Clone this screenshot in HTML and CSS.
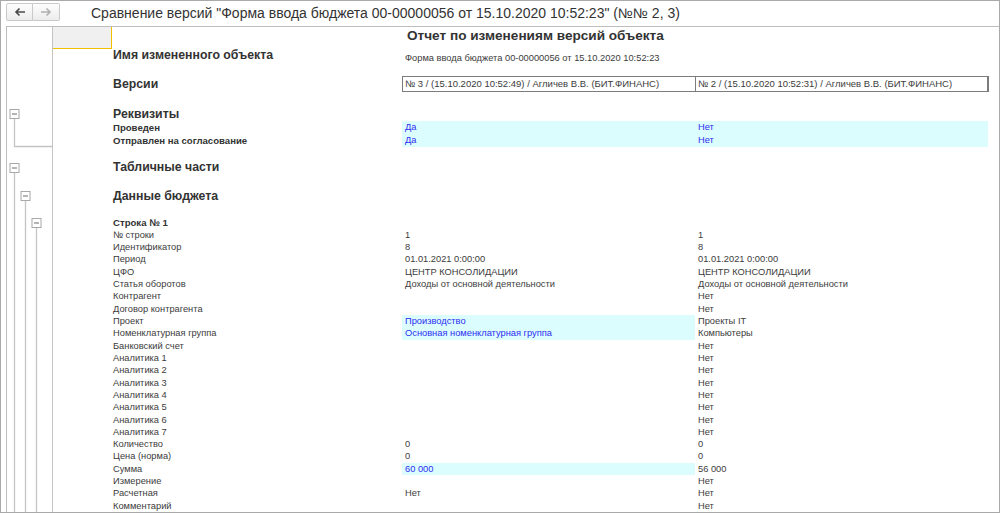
FILE: index.html
```html
<!DOCTYPE html>
<html lang="ru">
<head>
  <meta charset="UTF-8">
  <title>Сравнение версий</title>
  <link rel="stylesheet" href="styles.css">
</head>
<body>
  <div class="window">
    <div class="topbar">
      <div class="nav">
        <button class="nav-btn">
          <svg width="12" height="10" viewBox="0 0 12 10"><path d="M11 5H2M5.5 1.5L2 5l3.5 3.5" fill="none" stroke="#4a4a4a" stroke-width="1.6"/></svg>
        </button>
        <button class="nav-btn">
          <svg width="12" height="10" viewBox="0 0 12 10"><path d="M1 5h9M6.5 1.5L10 5 6.5 8.5" fill="none" stroke="#b0b0b0" stroke-width="1.6"/></svg>
        </button>
      </div>
      <div class="title">Сравнение версий "Форма ввода бюджета 00-00000056 от 15.10.2020 10:52:23" (№№ 2, 3)</div>
    </div>

    <div class="report">
      <div class="tree">
        <svg width="45" height="485" viewBox="0 0 45 485">
          <g stroke="#c4c4c4" stroke-width="1.3" fill="none">
            <path d="M7.5 91.5V119.5H45"/>
            <path d="M7.5 145.5V485"/>
            <path d="M18.5 173.5V485"/>
            <path d="M29.5 200.5V485"/>
          </g>
          <g fill="#fff" stroke="#a8a8a8">
            <rect x="3" y="82.5" width="9" height="9"/>
            <rect x="3" y="136.5" width="9" height="9"/>
            <rect x="14" y="164.5" width="9" height="9"/>
            <rect x="25" y="191.5" width="9" height="9"/>
          </g>
          <g stroke="#6a6a6a">
            <path d="M5 87h5M5 141h5M16 169h5M27 196h5"/>
          </g>
        </svg>
      </div>

      <div class="sheet">
        <div class="head-row">
          <div class="corner"></div>
          <div class="report-title">Отчет по изменениям версий объекта</div>
        </div>

        <div class="row name-row">
          <div class="label sec">Имя измененного объекта</div>
          <div class="obj-name">Форма ввода бюджета 00-00000056 от 15.10.2020 10:52:23</div>
        </div>

        <div class="row ver-row">
          <div class="label sec">Версии</div>
          <div class="ver-table">
            <div class="ver-cell">№ 3 / (15.10.2020 10:52:49) / Агличев В.В. (БИТ.ФИНАНС)</div>
            <div class="ver-cell">№ 2 / (15.10.2020 10:52:31) / Агличев В.В. (БИТ.ФИНАНС)</div>
          </div>
        </div>

        <div class="row sec-row first-sec">
          <div class="label sec">Реквизиты</div>
        </div>
        <div class="row attr-row">
          <div class="label bold">Проведен</div>
          <div class="val diff">Да</div>
          <div class="val diff">Нет</div>
        </div>
        <div class="row attr-row">
          <div class="label bold">Отправлен на согласование</div>
          <div class="val diff">Да</div>
          <div class="val diff">Нет</div>
        </div>

        <div class="row sec-row tab-sec">
          <div class="label sec">Табличные части</div>
        </div>
        <div class="row sec-row budget-sec">
          <div class="label sec">Данные бюджета</div>
        </div>

        <div class="row data-row line-head">
          <div class="label bold">Строка № 1</div>
        </div>
        <div class="row data-row"><div class="label">№ строки</div><div class="val">1</div><div class="val">1</div></div>
        <div class="row data-row"><div class="label">Идентификатор</div><div class="val">8</div><div class="val">8</div></div>
        <div class="row data-row"><div class="label">Период</div><div class="val">01.01.2021 0:00:00</div><div class="val">01.01.2021 0:00:00</div></div>
        <div class="row data-row"><div class="label">ЦФО</div><div class="val">ЦЕНТР КОНСОЛИДАЦИИ</div><div class="val">ЦЕНТР КОНСОЛИДАЦИИ</div></div>
        <div class="row data-row"><div class="label">Статья оборотов</div><div class="val">Доходы от основной деятельности</div><div class="val">Доходы от основной деятельности</div></div>
        <div class="row data-row"><div class="label">Контрагент</div><div class="val"></div><div class="val">Нет</div></div>
        <div class="row data-row"><div class="label">Договор контрагента</div><div class="val"></div><div class="val">Нет</div></div>
        <div class="row data-row"><div class="label">Проект</div><div class="val diff">Производство</div><div class="val">Проекты IT</div></div>
        <div class="row data-row"><div class="label">Номенклатурная группа</div><div class="val diff">Основная номенклатурная группа</div><div class="val">Компьютеры</div></div>
        <div class="row data-row"><div class="label">Банковский счет</div><div class="val"></div><div class="val">Нет</div></div>
        <div class="row data-row"><div class="label">Аналитика 1</div><div class="val"></div><div class="val">Нет</div></div>
        <div class="row data-row"><div class="label">Аналитика 2</div><div class="val"></div><div class="val">Нет</div></div>
        <div class="row data-row"><div class="label">Аналитика 3</div><div class="val"></div><div class="val">Нет</div></div>
        <div class="row data-row"><div class="label">Аналитика 4</div><div class="val"></div><div class="val">Нет</div></div>
        <div class="row data-row"><div class="label">Аналитика 5</div><div class="val"></div><div class="val">Нет</div></div>
        <div class="row data-row"><div class="label">Аналитика 6</div><div class="val"></div><div class="val">Нет</div></div>
        <div class="row data-row"><div class="label">Аналитика 7</div><div class="val"></div><div class="val">Нет</div></div>
        <div class="row data-row"><div class="label">Количество</div><div class="val">0</div><div class="val">0</div></div>
        <div class="row data-row"><div class="label">Цена (норма)</div><div class="val">0</div><div class="val">0</div></div>
        <div class="row data-row"><div class="label">Сумма</div><div class="val diff">60 000</div><div class="val">56 000</div></div>
        <div class="row data-row"><div class="label">Измерение</div><div class="val"></div><div class="val">Нет</div></div>
        <div class="row data-row"><div class="label">Расчетная</div><div class="val">Нет</div><div class="val">Нет</div></div>
        <div class="row data-row"><div class="label">Комментарий</div><div class="val"></div><div class="val">Нет</div></div>
      </div>
    </div>
  </div>
</body>
</html>
```

FILE: styles.css
```css
* { box-sizing: border-box; margin: 0; padding: 0; }
body { font-family: "Liberation Sans", Arial, sans-serif; background: #fff; color: #3c3c3c; }

.window { width: 1000px; height: 513px; border: 1px solid #a9a9a9; display: flex; flex-direction: column; overflow: hidden; }

/* top bar */
.topbar { height: 25px; display: flex; align-items: flex-start; flex-shrink: 0; }
.nav { display: flex; margin: 2px 0 0 5px; }
.nav-btn { width: 27px; height: 18px; border: 1px solid #c9c9c9; background: linear-gradient(#fdfdfd, #ececec); display: flex; align-items: center; justify-content: center; }
.nav-btn + .nav-btn { border-left: none; }
.nav-btn:first-child { border-radius: 2px 0 0 2px; }
.nav-btn:last-child { border-radius: 0 2px 2px 0; }
.title { margin-left: 31px; font-size: 14px; line-height: 24px; color: #333; white-space: nowrap; }

/* report frame */
.report { flex: 1; margin-left: 5px; border-top: 1px solid #bdbdbd; border-left: 1px solid #bdbdbd; display: flex; overflow: hidden; }
.tree { width: 45px; flex-shrink: 0; }
.tree svg { display: block; }
.sheet { flex: 1; border-left: 1px solid #c4c4c4; overflow: hidden; font-size: 9.3px; }

.head-row { display: flex; height: 22px; }
.corner { width: 59px; height: 22px; background: #f0f0f0; border-right: 1px solid #f2c200; border-bottom: 1px solid #f2c200; }
.report-title { margin-left: 295px; font-size: 13.6px; font-weight: bold; line-height: 18px; color: #333; white-space: nowrap; }

.row { display: flex; padding-left: 60px; white-space: nowrap; }
.label { width: 289px; flex-shrink: 0; }
.val { width: 293px; flex-shrink: 0; padding-left: 3px; }
.val.diff { background: #dcfdfd; color: #2d2df5; }
.sec { font-size: 12.3px; font-weight: bold; color: #333; }
.bold { font-size: 9.6px; font-weight: bold; color: #333; }

.name-row { height: 16px; }
.name-row .label { line-height: 13px; }
.obj-name { padding: 3px 0 0 3px; line-height: 12px; font-size: 9.3px; }

.ver-row { margin-top: 11px; height: 16px; line-height: 14px; }
.ver-row .label { line-height: 16px; }
.ver-table { display: flex; width: 587px; height: 16px; border: 1px solid #7c7c7c; border-right-width: 2px; font-size: 9.5px; }
.ver-cell { width: 293px; padding-left: 2px; }
.ver-cell + .ver-cell { border-left: 1px solid #7c7c7c; }

.sec-row { height: 14px; line-height: 14px; }
.first-sec { margin-top: 15px; }
.tab-sec { margin-top: 13px; }
.budget-sec { margin-top: 15px; }

.attr-row { height: 13px; line-height: 13px; }

.data-row { height: 12.32px; line-height: 12.32px; }
.line-head { margin-top: 13.5px; }
```
